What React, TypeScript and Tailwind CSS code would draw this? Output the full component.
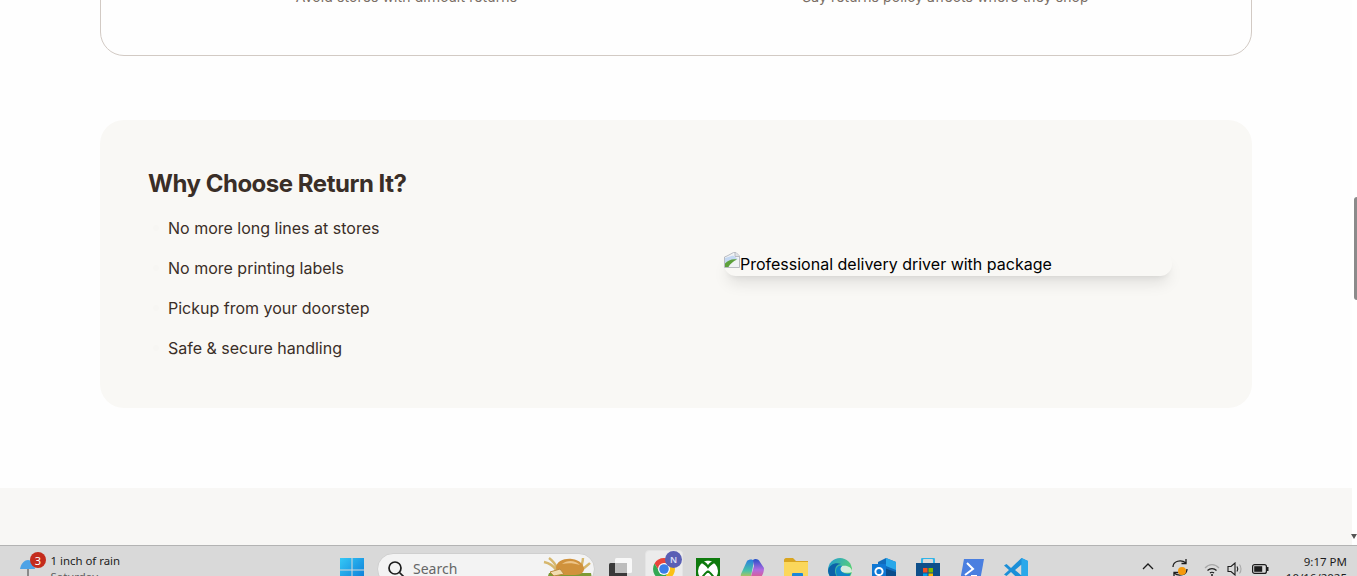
const features = ['No more long lines at stores', 'No more printing labels', 'Pickup from your doorstep', 'Safe & secure handling']

function BrokenImage() {
  return (
    <svg width="16" height="16" viewBox="0 0 16 16" className="inline-block shrink-0 align-top">
      <path d="M0.5 15.5 L0.5 5 L3 4 L9.5 0.5 L12 0.5 L15.5 4 L15.5 15.5 Z" fill="#f1f3f5" stroke="#b9bcc2" strokeWidth="1" />
      <path d="M11 0.5 L11 4.5 L15.5 4.5" fill="#dfe2e6" stroke="#b9bcc2" strokeWidth="1" />
      <path d="M1 6 L9 3.5 L14 7 L8 9 L1 12 Z" fill="#c4d8f2" />
      <path d="M1 15 L1 11.5 C4 8.5 8 6.5 13 7.5 C9 9.5 6 12 4.5 15 Z" fill="#5ea13c" />
    </svg>
  )
}

function Windows() {
  return (
    <svg width="24" height="24" viewBox="0 0 24 24">
      <defs>
        <linearGradient id="win" x1="0" y1="0" x2="1" y2="1">
          <stop offset="0" stopColor="#35c8f6" />
          <stop offset="1" stopColor="#0a78d6" />
        </linearGradient>
      </defs>
      <path d="M0 0h11.5v11.5H0zM12.5 0H24v11.5H12.5zM0 12.5h11.5V24H0zM12.5 12.5H24V24H12.5z" fill="url(#win)" />
    </svg>
  )
}

function Bread() {
  return (
    <svg width="50" height="24" viewBox="0 0 50 24">
      <path d="M7 18 H49 L50 24 H5 Z" fill="#7d9a35" />
      <path d="M14 15 C11 10 7 8 2 7 M15 13 C13 8 11 6 7 3" stroke="#d6b76d" strokeWidth="2.4" fill="none" />
      <path d="M39 13 C40 9 41 6 41 3 M40 15 C43 12 46 10 48 8" stroke="#d6b76d" strokeWidth="2.4" fill="none" />
      <path d="M14 13 C14 6 23 3 30 4 C38 5 42 10 42 14 C42 17 39 20 33 20 L19 20 C16 19 14 16 14 13 Z" fill="#d0923c" />
      <path d="M20 9 C25 5 33 5 38 10 C31 8 26 8 20 9 Z" fill="#eec588" />
      <path d="M8 17 L18 14 L22 19 L12 21 Z" fill="#f1dcb0" stroke="#bb8a3f" strokeWidth="1" />
    </svg>
  )
}

function TaskView() {
  return (
    <svg width="24" height="24" viewBox="0 0 24 24">
      <rect x="6" y="0" width="17" height="15" rx="1.5" fill="#f8f8f8" />
      <rect x="0" y="5" width="18" height="19" rx="1.5" fill="#3a3a3a" />
      <rect x="6" y="5" width="12" height="10" fill="#bdbdbd" />
    </svg>
  )
}

function Chrome() {
  return (
    <svg width="24" height="24" viewBox="0 0 24 24">
      <path d="M12 1 A11 11 0 0 1 21.5 6.5 L12 6.5 Z" fill="#e8453c" />
      <path d="M12 1 A11 11 0 0 0 2.5 6.5 L7 14 L12 7 Z" fill="#e8453c" />
      <path d="M2.5 6.5 A11 11 0 0 0 12 23 L16.5 15 L7 14 Z" fill="#34a853" />
      <path d="M21.5 6.5 A11 11 0 0 1 12 23 L16.5 14 L12 6.5 Z" fill="#fbc116" />
      <circle cx="12" cy="12" r="6" fill="#fff" />
      <circle cx="12" cy="12" r="4.8" fill="#3b7de8" />
    </svg>
  )
}

function Xbox() {
  return (
    <svg width="24" height="24" viewBox="0 0 24 24">
      <rect width="24" height="24" fill="#0e7a0d" />
      <circle cx="12" cy="13" r="10" fill="#fff" />
      <path d="M4 4 C8 6 11 9 12 11 C13 9 16 6 20 4 C16 1 8 1 4 4 Z" fill="#0e7a0d" />
      <path d="M8 3.5 C10 2.5 14 2.5 16 3.5 C14 4.5 13 5.5 12 7 C11 5.5 10 4.5 8 3.5 Z" fill="#fff" />
      <path d="M12 13 C9 15.5 6 19 5 22 M12 13 C15 15.5 18 19 19 22" fill="none" stroke="#0e7a0d" strokeWidth="2" />
    </svg>
  )
}

function Copilot() {
  return (
    <svg width="24" height="24" viewBox="0 0 24 24">
      <defs>
        <linearGradient id="cpa" x1="0" y1="0" x2="0" y2="1">
          <stop offset="0" stopColor="#2a7de1" />
          <stop offset="0.55" stopColor="#48c3a8" />
          <stop offset="1" stopColor="#f2c230" />
        </linearGradient>
        <linearGradient id="cpb" x1="0" y1="0" x2="0" y2="1">
          <stop offset="0" stopColor="#2450c8" />
          <stop offset="0.5" stopColor="#b26be0" />
          <stop offset="1" stopColor="#f0566c" />
        </linearGradient>
      </defs>
      <path d="M7 3 C9 1 13 1 14 3 L11 18 C10 21 8 22 5 22 C2 22 0 20 1 16 Z" fill="url(#cpa)" />
      <path d="M13 2 C15 0 19 1 20 4 L24 10 C24 15 22 19 19 21 C17 23 12 23 10 22 L14 8 Z" fill="url(#cpb)" />
    </svg>
  )
}

function Folder() {
  return (
    <svg width="24" height="24" viewBox="0 0 24 24">
      <path d="M0 2 C0 1 1 0 2 0 H9 L12 3 H24 V24 H0 Z" fill="#d9a520" />
      <rect x="0" y="4" width="24" height="20" fill="#fbd75b" />
      <rect x="8" y="15" width="11" height="9" rx="1" fill="#1c87d8" />
    </svg>
  )
}

function Edge() {
  return (
    <svg width="24" height="24" viewBox="0 0 24 24">
      <defs>
        <linearGradient id="edg" x1="0" y1="0" x2="1" y2="0.6">
          <stop offset="0" stopColor="#1f9cd8" />
          <stop offset="1" stopColor="#5fd66a" />
        </linearGradient>
      </defs>
      <circle cx="12" cy="12" r="12" fill="url(#edg)" />
      <path d="M0 13 C1 6 8 4 13 6 C9 6 7 9 7 13 C7 19 13 23 19 21 C14 26 2 25 0 13 Z" fill="#0c62a8" />
      <path d="M24 14 C24 9 19 7 14 8 C12 9 11 11 12 13 C14 14 18 16 24 14 Z" fill="#e3eee6" opacity="0.9" />
      <path d="M8 13 C8 9 11 7 14 8 C12 10 12 12 14 14 C17 16 20 16 23 15 C21 21 15 23 12 21 C9 19 8 16 8 13 Z" fill="#0f86c8" />
    </svg>
  )
}

function Outlook() {
  return (
    <svg width="24" height="24" viewBox="0 0 24 24">
      <path d="M6 4 L14 0 L24 4 V24 H6 Z" fill="#0f6cbd" />
      <path d="M14 0 L24 4 V12 L14 8 Z" fill="#28a8ea" />
      <path d="M12 10 L24 14 V24 H12 Z" fill="#0a4d8c" />
      <rect x="0" y="6" width="14" height="15" fill="#0f78d4" />
      <circle cx="7" cy="13.5" r="3.6" fill="none" stroke="#fff" strokeWidth="2" />
    </svg>
  )
}

function Store() {
  return (
    <svg width="24" height="24" viewBox="0 0 24 24">
      <path d="M6 5 V2 C6 1 7 0 8 0 H16 C17 0 18 1 18 2 V5" fill="none" stroke="#30b4e8" strokeWidth="2" />
      <rect x="0" y="5" width="24" height="19" fill="#0e4f8a" />
      <rect x="7" y="10" width="4.5" height="4.5" fill="#f25022" />
      <rect x="12.5" y="10" width="4.5" height="4.5" fill="#7fba00" />
      <rect x="7" y="15.5" width="4.5" height="4.5" fill="#00a4ef" />
      <rect x="12.5" y="15.5" width="4.5" height="4.5" fill="#ffb900" />
    </svg>
  )
}

function PowerShell() {
  return (
    <svg width="24" height="24" viewBox="0 0 24 24">
      <path d="M4 1 H24 L20 23 H0 Z" fill="#4a7fe0" />
      <path d="M7 5 L13 11 L5 17" fill="none" stroke="#fff" strokeWidth="2" />
      <path d="M11 18 H17" stroke="#fff" strokeWidth="2" />
    </svg>
  )
}

function VSCode() {
  return (
    <svg width="24" height="24" viewBox="0 0 24 24">
      <path d="M17.5 0 L24 3 V21 L17.5 24 L7 14 L2.5 18 L0 16.5 L5 12 L0 7.5 L2.5 6 L7 10 Z M17.5 6.5 L11 12 L17.5 17.5 Z" fill="#1b8fd8" />
      <path d="M17.5 0 L24 3 V21 L17.5 24 Z" fill="#2aa8ea" />
    </svg>
  )
}

function TrayIcons() {
  return (
    <div className="flex items-start">
      <svg width="14" height="8" viewBox="0 0 14 8" className="mt-[16px]">
        <path d="M2 7 L7 2 L12 7" fill="none" stroke="#1c1c1c" strokeWidth="1.3" />
      </svg>
      <div className="relative mt-[12px] ml-[16px]">
        <svg width="18" height="20" viewBox="0 0 18 20">
          <path d="M2 9 C2 3 10 1 15 5 M16 11 C16 17 8 19 3 15" fill="none" stroke="#1c1c1c" strokeWidth="1.3" />
          <path d="M15 1 V5.5 H10.5 M3 19 V14.5 H7.5" fill="none" stroke="#1c1c1c" strokeWidth="1.3" />
        </svg>
        <span className="absolute top-[9px] left-[7px] h-2 w-2 rounded-full bg-[#f59a0c]" />
      </div>
      <svg width="16" height="14" viewBox="0 0 16 14" className="mt-[17px] ml-[15px]">
        <path d="M1 5 C5 0.5 11 0.5 15 5" fill="none" stroke="#a8a8a8" strokeWidth="1.2" />
        <path d="M3.5 7.5 C6 5 10 5 12.5 7.5 M6 10 C7 9 9 9 10 10" fill="none" stroke="#1c1c1c" strokeWidth="1.2" />
        <circle cx="8" cy="12" r="1" fill="#1c1c1c" />
      </svg>
      <svg width="16" height="14" viewBox="0 0 16 14" className="mt-[16px] ml-[7px]">
        <path d="M1 4.5 H4 L8 1 V13 L4 9.5 H1 Z" fill="none" stroke="#1c1c1c" strokeWidth="1.1" />
        <path d="M10 4.5 C11 6 11 8 10 9.5" fill="none" stroke="#1c1c1c" strokeWidth="1.1" />
        <path d="M12.5 2.5 C14.5 5 14.5 9 12.5 11.5" fill="none" stroke="#a8a8a8" strokeWidth="1.1" />
      </svg>
      <svg width="17" height="10" viewBox="0 0 17 10" className="mt-[18px] ml-[9px]">
        <rect x="0.6" y="0.6" width="13.8" height="8.8" rx="2" fill="none" stroke="#1c1c1c" strokeWidth="1.2" />
        <rect x="2.2" y="2.2" width="8" height="5.6" fill="#1c1c1c" />
        <rect x="15" y="3" width="1.5" height="4" fill="#1c1c1c" />
      </svg>
    </div>
  )
}

export default function App() {
  return (
    <div className="flex h-[576px] w-full flex-col overflow-hidden bg-white font-['Inter',sans-serif]">
      <div className="flex h-[545px] shrink-0 overflow-hidden bg-[#fefefe]">
        <main className="min-w-0 flex-1">
          <section className="mx-auto mt-[-120px] flex h-[176px] w-[1152px] items-end rounded-[24px] border border-[#d2cac4] px-12 pb-12">
            <div className="grid w-full grid-cols-2 gap-6 text-center text-sm leading-5 tracking-[0.1px] text-[#7a6e65]">
              <p>Avoid stores with difficult returns</p>
              <p>Say returns policy affects where they shop</p>
            </div>
          </section>

          <section className="mx-auto mt-[64px] grid w-[1152px] grid-cols-2 items-center gap-8 rounded-[24px] bg-[#f9f8f5] p-12">
            <div>
              <h2 className="mb-4 text-2xl leading-8 font-bold tracking-[-0.02em] text-[#3a2e27]">Why Choose Return It?</h2>
              <ul className="flex flex-col gap-4">
                {features.map((item) => (
                  <li key={item} className="flex items-center gap-1 text-base leading-6 text-[#3a2e27]">
                    <span className="flex w-4 justify-center">
                      <span className="h-1.5 w-1.5 rounded-full bg-[#f7f6f3]" />
                    </span>
                    {item}
                  </li>
                ))}
              </ul>
            </div>
            <div className="mx-auto flex w-full max-w-md rounded-2xl text-base leading-6 text-black shadow-[0_10px_15px_-3px_rgba(0,0,0,0.1),0_4px_6px_-4px_rgba(0,0,0,0.1)]">
              <BrokenImage />
              <span>Professional delivery driver with package</span>
            </div>
          </section>

          <footer className="mt-20 h-[57px] bg-[#f8f7f5]" />
        </main>

        <div className="relative flex w-[5px] shrink-0 justify-end bg-white">
          <div className="mt-[197px] h-[103px] w-[3px] rounded-l-sm bg-[#8b8b8b]" />
          <div className="absolute top-[534px] right-0 h-0 w-0 border-x-[3px] border-t-[5px] border-x-transparent border-t-[#555]" />
        </div>
      </div>

      <div className="flex h-[31px] shrink-0 items-start overflow-hidden border-t border-[#b3b3b3] bg-[#d9d9d9] font-['Noto_Sans',sans-serif]">
        <div className="relative flex w-[340px] shrink-0 items-start pl-[20px]">
          <svg width="15" height="17" viewBox="0 0 15 17" className="mt-[14px]">
            <path d="M0 9 C1 3 5 0 8 0 C11 0 14 3 15 9 Z" fill="#4ea3e6" />
            <path d="M8 9 V17" stroke="#555" strokeWidth="1.2" />
          </svg>
          <span className="absolute top-[6px] left-[30px] flex h-4 w-4 items-center justify-center rounded-full bg-[#c42b1c] text-[11px] leading-none text-white">3</span>
          <div className="ml-[15.5px] pt-[7px] text-[11.4px] leading-4 text-[#1c1c1c]">
            <p>1 inch of rain</p>
            <p className="text-[#5c5c5c]">Saturday</p>
          </div>
        </div>

        <div className="mt-[12px] shrink-0"><Windows /></div>

        <div className="mt-[7px] ml-[13px] flex h-[32px] w-[218px] shrink-0 items-start rounded-full border border-[#cfcfcf] bg-[#f3f3f3] pl-[9px]">
          <svg width="18" height="18" viewBox="0 0 18 18" className="mt-[6px]">
            <circle cx="8" cy="8" r="6" fill="none" stroke="#1c1c1c" strokeWidth="1.7" />
            <path d="M12.5 12.5 L17 17" stroke="#1c1c1c" strokeWidth="1.7" />
          </svg>
          <span className="ml-[8px] pt-[5px] text-[14px] leading-5 text-[#666]">Search</span>
          <div className="mt-[1px] ml-auto pr-[2px]"><Bread /></div>
        </div>

        <div className="mt-[12px] ml-[14px] shrink-0"><TaskView /></div>

        <div className="relative mt-[4px] ml-[12px] flex h-[38px] w-[38px] shrink-0 justify-center rounded-[4px] border border-[#e4e4e4] bg-[#ececec] pt-[6px]">
          <Chrome />
          <span className="absolute top-0 left-[19px] flex h-[17px] w-[17px] items-center justify-center rounded-full bg-[#5a5fb5] text-[9px] leading-none font-semibold text-[#dfe0f5]">N</span>
        </div>

        <div className="mt-[12px] ml-[13px] flex shrink-0 gap-5">
          <Xbox />
          <Copilot />
          <Folder />
          <Edge />
          <Outlook />
          <Store />
          <PowerShell />
          <VSCode />
        </div>

        <div className="ml-[113px] shrink-0"><TrayIcons /></div>

        <div className="ml-auto shrink-0 pt-[8px] pr-[10px] text-right text-[11.5px] leading-4 text-[#1c1c1c]">
          <p>9:17 PM</p>
          <p>10/16/2025</p>
        </div>
      </div>
    </div>
  )
}
